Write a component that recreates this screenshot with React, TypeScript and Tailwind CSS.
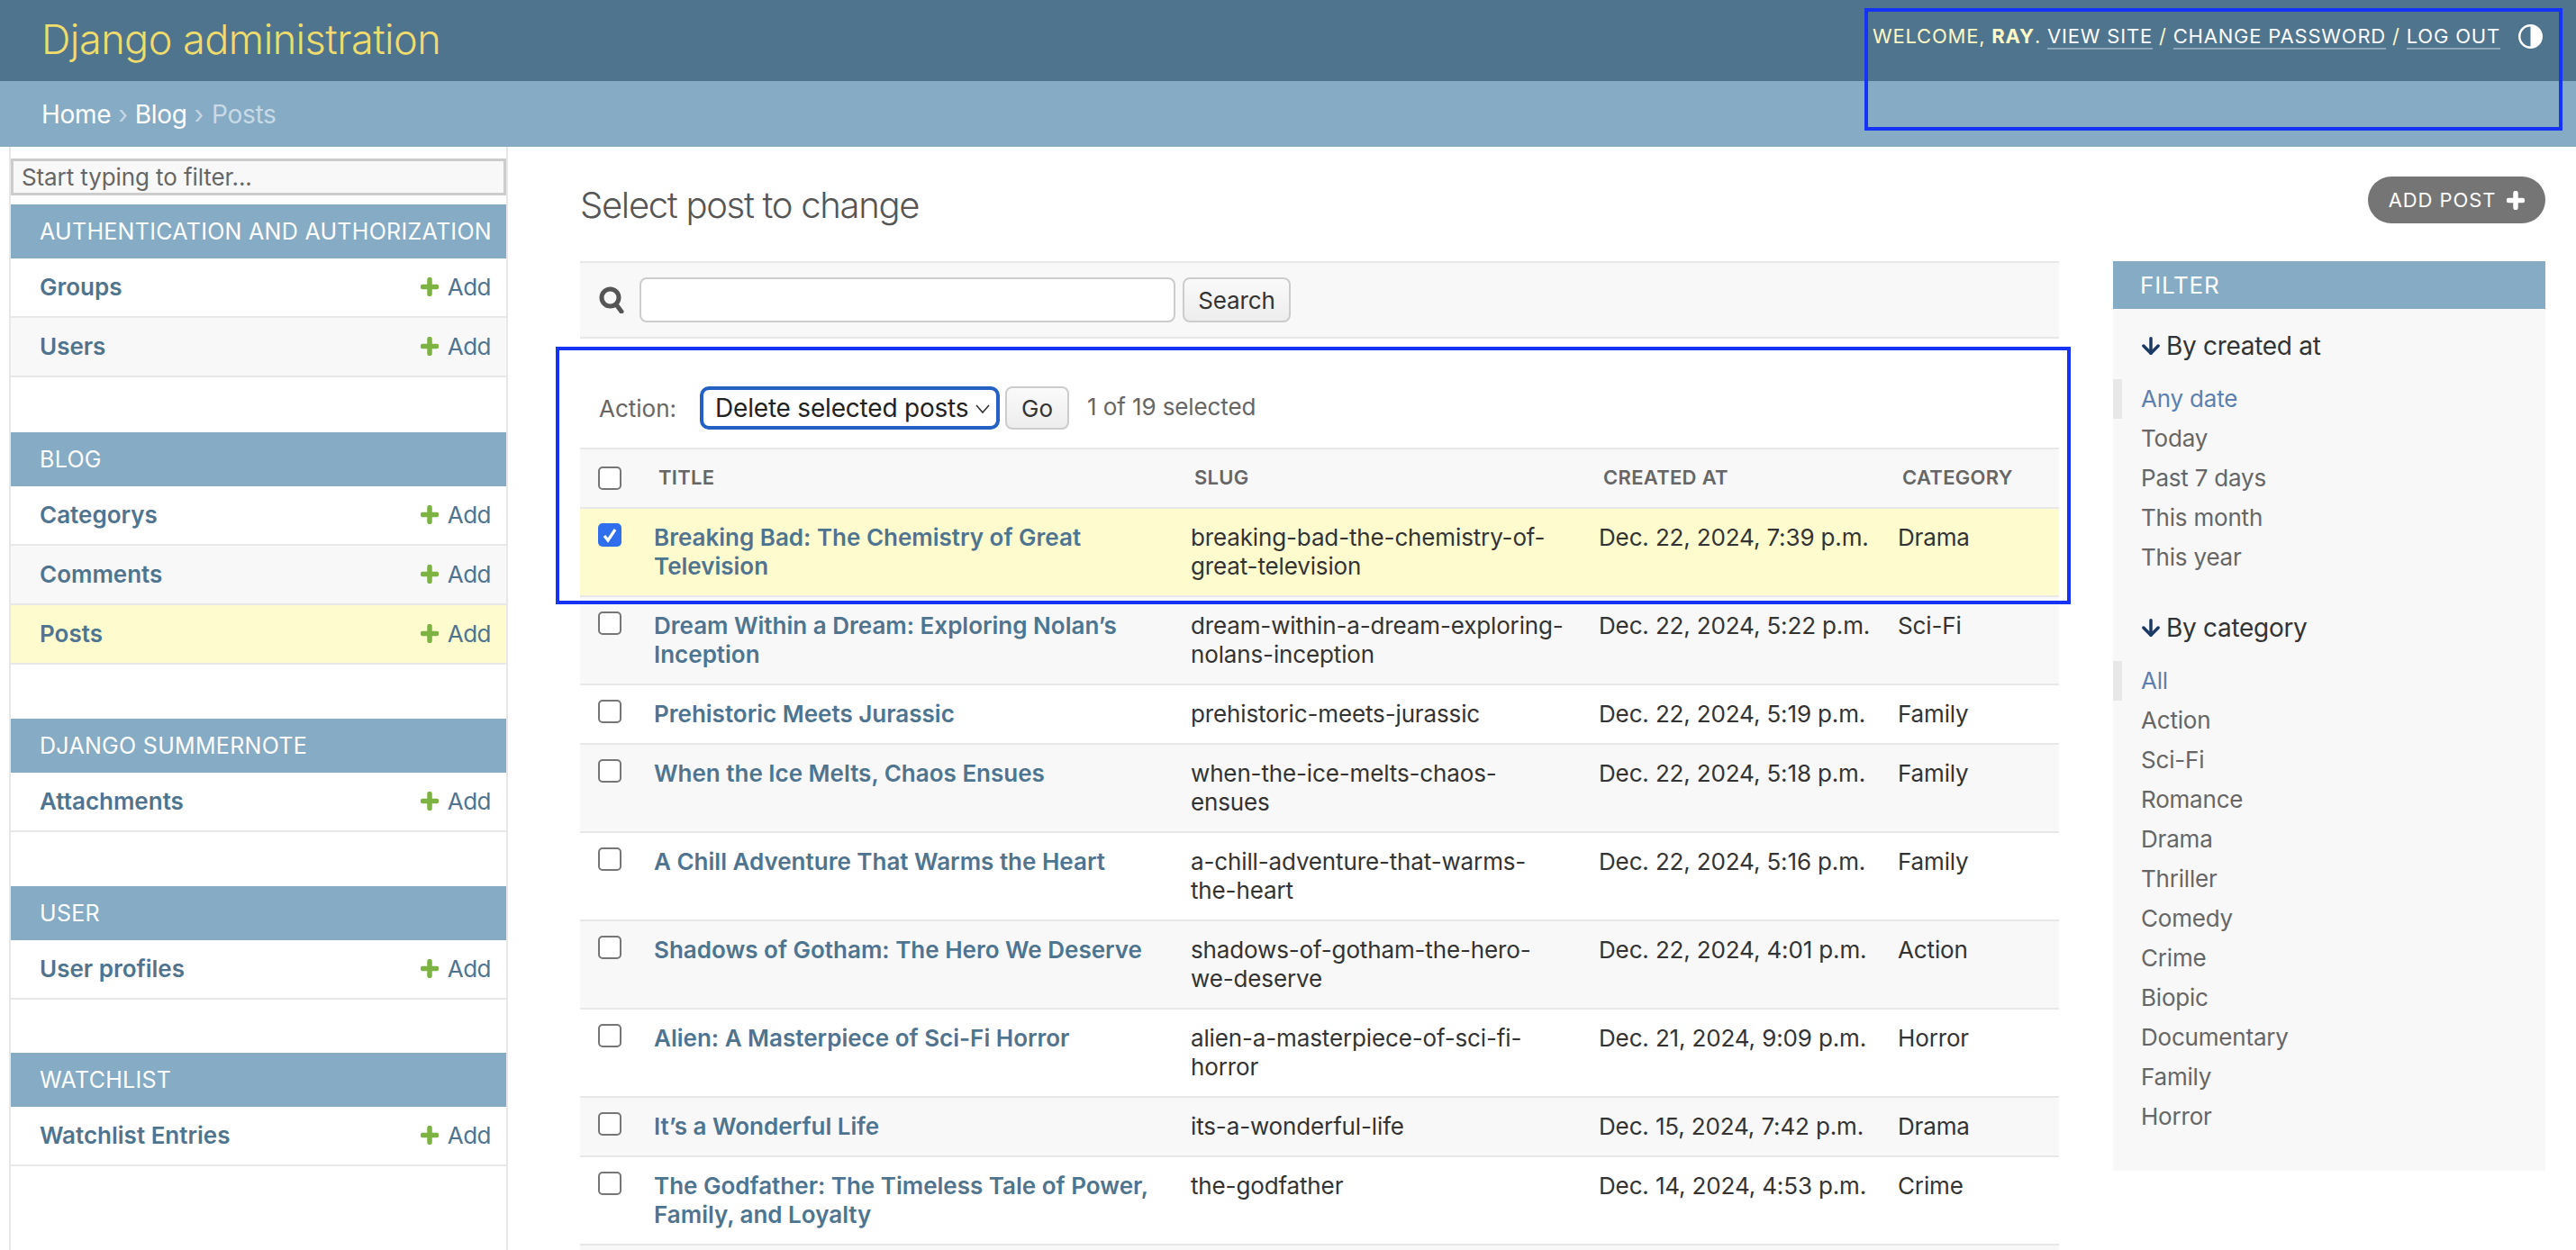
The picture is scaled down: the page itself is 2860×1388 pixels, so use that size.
import React from "react";
import { ArrowDown } from "lucide-react";

const FONT = "font-['Inter','Liberation_Sans',sans-serif]";

function Plus({ color = "#7CB342", w = 20, h = 21 }: { color?: string; w?: number; h?: number }) {
  return (
    <svg width={w} height={h} viewBox="0 0 20 21" className="shrink-0">
      <path d="M10 2.5v16M2.5 10.5h15" stroke={color} strokeWidth="5.5" strokeLinecap="round" />
    </svg>
  );
}

function Check({ on = false }: { on?: boolean }) {
  return on ? (
    <div className="w-[26px] h-[26px] rounded-[5px] bg-[#2F6FED] flex items-center justify-center">
      <svg width="20" height="20" viewBox="0 0 20 20">
        <path d="M4 11l4 5 8-12" fill="none" stroke="#fff" strokeWidth="3.2" />
      </svg>
    </div>
  ) : (
    <div className="w-[26px] h-[26px] rounded-[5px] border-2 border-[#767676] bg-white" />
  );
}

const sections = [
  { title: "Authentication and Authorization", items: ["Groups", "Users"], mb: "mb-[61px]" },
  { title: "Blog", items: ["Categorys", "Comments", "Posts"], mb: "mb-[60px]" },
  { title: "Django Summernote", items: ["Attachments"], mb: "mb-[60px]" },
  { title: "User", items: ["User profiles"], mb: "mb-[59px]" },
  { title: "Watchlist", items: ["Watchlist Entries"], mb: "mb-0" },
];

const rows = [
  ["Breaking Bad: The Chemistry of Great Television", "breaking-bad-the-chemistry-of-great-television", "Dec. 22, 2024, 7:39 p.m.", "Drama"],
  ["Dream Within a Dream: Exploring Nolan’s Inception", "dream-within-a-dream-exploring-nolans-inception", "Dec. 22, 2024, 5:22 p.m.", "Sci-Fi"],
  ["Prehistoric Meets Jurassic", "prehistoric-meets-jurassic", "Dec. 22, 2024, 5:19 p.m.", "Family"],
  ["When the Ice Melts, Chaos Ensues", "when-the-ice-melts-chaos-ensues", "Dec. 22, 2024, 5:18 p.m.", "Family"],
  ["A Chill Adventure That Warms the Heart", "a-chill-adventure-that-warms-the-heart", "Dec. 22, 2024, 5:16 p.m.", "Family"],
  ["Shadows of Gotham: The Hero We Deserve", "shadows-of-gotham-the-hero-we-deserve", "Dec. 22, 2024, 4:01 p.m.", "Action"],
  ["Alien: A Masterpiece of Sci-Fi Horror", "alien-a-masterpiece-of-sci-fi-horror", "Dec. 21, 2024, 9:09 p.m.", "Horror"],
  ["It’s a Wonderful Life", "its-a-wonderful-life", "Dec. 15, 2024, 7:42 p.m.", "Drama"],
  ["The Godfather: The Timeless Tale of Power, Family, and Loyalty", "the-godfather", "Dec. 14, 2024, 4:53 p.m.", "Crime"],
  ["", "", "", ""],
];

function FilterGroup({ title, items, cls }: { title: string; items: string[]; cls: string }) {
  return (
    <div className={cls}>
      <div className="flex items-center h-[40px] pl-[30px] text-[28px] leading-[40px] text-[#333] tracking-[-0.3px]">
        <ArrowDown size={28} strokeWidth={3} color="#1B3A66" className="mr-[3px] -ml-[2px]" />
        <span>{title}</span>
      </div>
      <ul className="mt-[17px]">
        {items.map((it, i) => (
          <li
            key={it}
            className={`h-[44px] leading-[44px] pl-[31px] text-[26px] tracking-[-0.2px] ${
              i === 0 ? "text-[#5B80B2] border-l-[10px] border-[#E8E8E8] !pl-[21px]" : "text-[#666]"
            }`}
          >
            {it}
          </li>
        ))}
      </ul>
    </div>
  );
}

export default function App() {
  return (
    <div className={`relative w-[2860px] h-[1388px] overflow-hidden bg-white text-[#333] ${FONT}`}>
      {/* header */}
      <header className="h-[90px] bg-[#4F748E] flex items-center justify-between pl-[46px] pr-[37px]">
        <h1 className="-mt-[3px] text-[45px] font-light text-[#F0DC6C] tracking-[-0.5px] leading-none">Django administration</h1>
        <div className="flex items-center -mt-[10px] text-[22px] tracking-[0.8px] uppercase text-[#FDF8C4]">
          <span>
            Welcome, <strong className="font-bold">Ray</strong>.{" "}
            <a className="text-white border-b-2 border-[#8CA6B8]">View site</a> /{" "}
            <a className="text-white border-b-2 border-[#8CA6B8]">Change password</a> /{" "}
            <a className="text-white border-b-2 border-[#8CA6B8]">Log out</a>
          </span>
          <svg width="27" height="27" viewBox="0 0 26 26" className="ml-[20px]">
            <circle cx="13" cy="13" r="11.8" fill="none" stroke="#fff" strokeWidth="2.4" />
            <path d="M13 1a12 12 0 0 1 0 24z" fill="#fff" />
          </svg>
        </div>
      </header>

      {/* breadcrumbs */}
      <div className="h-[73px] bg-[#85ABC5] flex items-center pl-[46px] text-[28px] tracking-[-0.3px] text-white">
        <a>Home</a>
        <span className="mx-[8px] text-[#C5D7E3]">›</span>
        <a>Blog</a>
        <span className="ml-[8px] mr-[9px] text-[#C5D7E3]">›</span>
        <span className="text-[#C9DAE6]">Posts</span>
      </div>

      <div className="flex h-[1225px]">
        {/* sidebar */}
        <nav className="ml-[10px] w-[554px] shrink-0 border-x-2 border-[#E8E8E8] pt-[13px]">
          <div className="h-[41px] border-[3px] border-[#CCCCCC] bg-[#F8F8F8] flex items-center pl-[9px] text-[26px] text-[#666] tracking-[-0.1px]">
            Start typing to filter...
          </div>
          <div className="mt-[10px]">
            {sections.map((s) => (
              <section key={s.title} className={s.mb}>
                <div className="h-[60px] pt-[1px] bg-[#85ABC5] text-white uppercase text-[25px] tracking-[0.3px] pl-[32px] flex items-center whitespace-nowrap">
                  {s.title}
                </div>
                {s.items.map((it, i) => (
                  <div
                    key={it}
                    className={`h-[66px] pb-[1px] border-b-2 border-[#E8E8E8] flex items-center justify-between pl-[32px] pr-[17px] text-[26px] ${
                      it === "Posts" ? "bg-[#FEFCCF]" : i % 2 === 1 ? "bg-[#F8F8F8]" : "bg-white"
                    }`}
                  >
                    <a className="font-semibold text-[#4E7490]">{it}</a>
                    <span className="flex items-center text-[#4E7490] gap-[10px] tracking-[-0.5px]">
                      <Plus />
                      <a>Add</a>
                    </span>
                  </div>
                ))}
              </section>
            ))}
          </div>
        </nav>

        {/* main */}
        <main className="flex-1 pl-[80px] pr-[34px] relative">
          <div className="flex items-start justify-between h-[127px]">
            <h1 className="mt-[43px] text-[40px] leading-[44px] font-light text-[#555] tracking-[-1.3px]">Select post to change</h1>
            <a className="mt-[33px] h-[52px] w-[197px] rounded-[26px] bg-[#757575] text-white uppercase text-[22px] tracking-[0.9px] flex items-center justify-center gap-[12px]">
              Add post
              <Plus color="#fff" />
            </a>
          </div>

          <div className="flex items-start gap-[60px]">
            {/* list */}
            <div className="w-[1642px] shrink-0">
              <div className="h-[86px] bg-[#F8F8F8] border-y-2 border-[#E8E8E8] flex items-center pl-[21px]">
                <svg width="28" height="30" viewBox="0 0 28 30">
                  <circle cx="12.5" cy="12.5" r="9.5" fill="none" stroke="#555" strokeWidth="5" />
                  <path d="M19 20l6 8" stroke="#555" strokeWidth="5" strokeLinecap="round" />
                </svg>
                <div className="ml-[17px] w-[595px] h-[50px] bg-white border-2 border-[#CCCCCC] rounded-[8px]" />
                <div className="ml-[8px] w-[120px] h-[50px] rounded-[8px] border-2 border-[#CCCCCC] bg-linear-to-b from-[#FAFAFA] to-[#EDEDED] flex items-center justify-center text-[26px] text-[#333] tracking-[-0.1px]">
                  Search
                </div>
              </div>

              <div className="h-[121px] flex items-start pl-[21px] pt-[53px] text-[26px]">
                <span className="h-[48px] flex items-center text-[#666]">Action:</span>
                <div className="ml-[26px] w-[333px] h-[48px] rounded-[10px] border-4 border-[#2560C4] bg-white flex items-center justify-between pl-[13px] pr-[6px] text-[28px] text-[#222] tracking-[-0.2px]">
                  <span>Delete selected posts</span>
                  <svg width="18" height="18" viewBox="0 0 18 18">
                    <path d="M2 6l7 8 7-8" fill="none" stroke="#333" strokeWidth="1.6" />
                  </svg>
                </div>
                <div className="ml-[6px] w-[71px] h-[48px] rounded-[8px] border-2 border-[#CCCCCC] bg-linear-to-b from-[#FAFAFA] to-[#EDEDED] flex items-center justify-center text-[#333]">
                  Go
                </div>
                <span className="ml-[20px] h-[44px] flex items-center text-[#666] tracking-[-0.1px]">1 of 19 selected</span>
              </div>

              <table className="w-full table-fixed border-collapse text-[26px] leading-[32px] tracking-[-0.14px]">
                <colgroup>
                  <col className="w-[62px]" />
                  <col className="w-[597px]" />
                  <col className="w-[453px]" />
                  <col className="w-[331px]" />
                  <col />
                </colgroup>
                <thead>
                  <tr className="h-[66px] bg-[#F8F8F8] border-y-2 border-[#E8E8E8] text-[22px] font-semibold text-[#666] uppercase text-left">
                    <th className="pl-[20px] align-middle font-semibold">
                      <Check />
                    </th>
                    <th className="pl-[25px] pb-[2px] font-semibold tracking-[0.3px]">Title</th>
                    <th className="pl-[23px] pb-[2px] font-semibold tracking-[0.3px]">Slug</th>
                    <th className="pl-[24px] pb-[2px] font-semibold tracking-[0.3px]">Created at</th>
                    <th className="pl-[25px] pb-[2px] font-semibold tracking-[0.3px]">Category</th>
                  </tr>
                </thead>
                <tbody>
                  {rows.map((r, i) => (
                    <tr
                      key={i}
                      className={`border-b-2 border-[#E8E8E8] align-top ${
                        i === 0 ? "bg-[#FEFCCF]" : i % 2 === 1 ? "bg-[#F8F8F8]" : "bg-white"
                      }`}
                    >
                      <td className="pl-[20px] pt-[16px] pb-[16px]">
                        <Check on={i === 0} />
                      </td>
                      <td className="px-[20px] py-[16px] font-semibold text-[#4E7490] tracking-[0px]">{r[0]}</td>
                      <td className="pl-[19px] pr-[16px] py-[16px]">{r[1]}</td>
                      <td className="pl-[19px] pr-[20px] py-[16px] whitespace-nowrap">{r[2]}</td>
                      <td className="px-[20px] py-[16px]">{r[3]}</td>
                    </tr>
                  ))}
                </tbody>
              </table>
            </div>

            {/* filter */}
            <aside className="w-[480px] shrink-0 h-[1010px] bg-[#F8F8F8]">
              <div className="h-[53px] pb-[1px] bg-[#85ABC5] text-white uppercase text-[26px] tracking-[0.8px] pl-[30px] flex items-center">
                Filter
              </div>
              <FilterGroup cls="mt-[21px]" title="By created at" items={["Any date", "Today", "Past 7 days", "This month", "This year"]} />
              <FilterGroup
                cls="mt-[36px]"
                title="By category"
                items={["All", "Action", "Sci-Fi", "Romance", "Drama", "Thriller", "Comedy", "Crime", "Biopic", "Documentary", "Family", "Horror"]}
              />
            </aside>
          </div>
        </main>
      </div>

      {/* annotation rectangles */}
      <div className="absolute left-[2070px] top-[9px] w-[775px] h-[136px] border-[4px] border-[#1533F5] pointer-events-none" />
      <div className="absolute left-[617px] top-[385px] w-[1682px] h-[286px] border-[4px] border-[#1533F5] pointer-events-none" />
    </div>
  );
}
